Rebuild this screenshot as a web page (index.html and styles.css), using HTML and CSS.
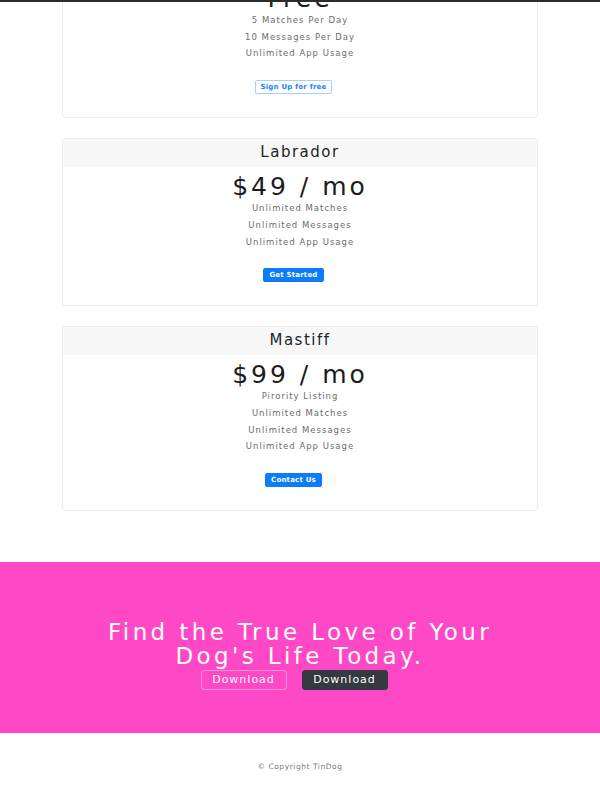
FILE: index.html
```html
<!DOCTYPE html>
<html lang="en">
<head>
<meta charset="utf-8">
<title>TinDog Pricing</title>
<link rel="stylesheet" href="styles.css">
</head>
<body>
<div class="topbar"></div>
<section class="pricing">
  <div class="card card-first">
    <div class="card-header">Chihuahua</div>
    <div class="card-body">
      <h2 class="price">Free</h2>
      <p class="feature">5 Matches Per Day</p>
      <p class="feature">10 Messages Per Day</p>
      <p class="feature">Unlimited App Usage</p>
      <button class="btn btn-outline">Sign Up for free</button>
    </div>
  </div>
  <div class="card">
    <div class="card-header">Labrador</div>
    <div class="card-body">
      <h2 class="price">$49 / mo</h2>
      <p class="feature">Unlimited Matches</p>
      <p class="feature">Unlimited Messages</p>
      <p class="feature">Unlimited App Usage</p>
      <button class="btn btn-primary">Get Started</button>
    </div>
  </div>
  <div class="card">
    <div class="card-header">Mastiff</div>
    <div class="card-body">
      <h2 class="price">$99 / mo</h2>
      <p class="feature">Pirority Listing</p>
      <p class="feature">Unlimited Matches</p>
      <p class="feature">Unlimited Messages</p>
      <p class="feature">Unlimited App Usage</p>
      <button class="btn btn-primary">Contact Us</button>
    </div>
  </div>
</section>
<section class="cta">
  <h3 class="cta-title">Find the True Love of Your<br>Dog's Life Today.</h3>
  <div class="cta-buttons">
    <button class="btn-lg btn-light-outline">Download</button>
    <button class="btn-lg btn-dark">Download</button>
  </div>
</section>
<footer class="footer">
  <p class="copyright">© Copyright TinDog</p>
</footer>
</body>
</html>
```
FILE: styles.css
```css
* { box-sizing: border-box; }
html, body { margin: 0; padding: 0; background: #fff; }
body {
  font-family: "DejaVu Sans", "Noto Sans", sans-serif;
  color: #212529;
  overflow: hidden;
}
.topbar {
  position: fixed;
  top: 0; left: 0; right: 0;
  height: 2px;
  background: #2b2b2b;
  z-index: 10;
}
.pricing {
  padding: 0 62px 51px;
  display: flex;
  flex-direction: column;
  gap: 20px;
}
.card {
  border: 1px solid #ececec;
  border-radius: 3px;
  background: #fff;
  overflow: hidden;
}
.card-first { margin-top: -50px; }
.card-header {
  height: 28px;
  line-height: 27px;
  background: #f7f7f7;
  text-align: center;
  font-size: 15px;
  color: #212529;
  letter-spacing: 1.5px;
}
.card-body {
  padding: 6px 0 23px;
  text-align: center;
}
.price {
  margin: 0;
  font-size: 25px;
  font-weight: 400;
  line-height: 27px;
  letter-spacing: 3px;
  color: #1c1c1c;
}
.feature {
  margin: 0;
  font-size: 8.5px;
  line-height: 16.7px;
  color: #6c6c6c;
  letter-spacing: 1px;
}
.btn {
  margin-top: 18px;
  margin-right: 13px;
  font-family: inherit;
  font-size: 7px;
  font-weight: 700;
  line-height: 10px;
  padding: 1px 5px;
  border-radius: 2px;
  letter-spacing: 0.2px;
  cursor: pointer;
}
.btn-primary {
  background: #0d7cf8;
  color: #fff;
  border: 1px solid #0d7cf8;
}
.btn-outline {
  background: #fff;
  color: #1a82f7;
  border: 1px solid #a9cff8;
}
.cta {
  background: #ff48c6;
  padding: 58px 0 43px;
  text-align: center;
}
.cta-title {
  margin: 0 0 2px;
  color: #fff;
  font-size: 23px;
  font-weight: 400;
  line-height: 24px;
  letter-spacing: 3.4px;
}
.cta-buttons {
  display: flex;
  justify-content: center;
  gap: 15px;
  padding-right: 12px;
}
.btn-lg {
  width: 86px;
  height: 20px;
  font-family: inherit;
  font-size: 11px;
  line-height: 18px;
  padding: 0;
  border-radius: 3px;
  letter-spacing: 1px;
}
.btn-light-outline {
  background: transparent;
  color: #fff;
  border: 1px solid #ff8fdc;
}
.btn-dark {
  background: #343a40;
  color: #fff;
  border: 1px solid #343a40;
}
.footer {
  height: 67px;
  display: flex;
  align-items: center;
  justify-content: center;
}
.copyright {
  margin: 0;
  font-size: 7.5px;
  color: #777;
  letter-spacing: 0.55px;
}
```
